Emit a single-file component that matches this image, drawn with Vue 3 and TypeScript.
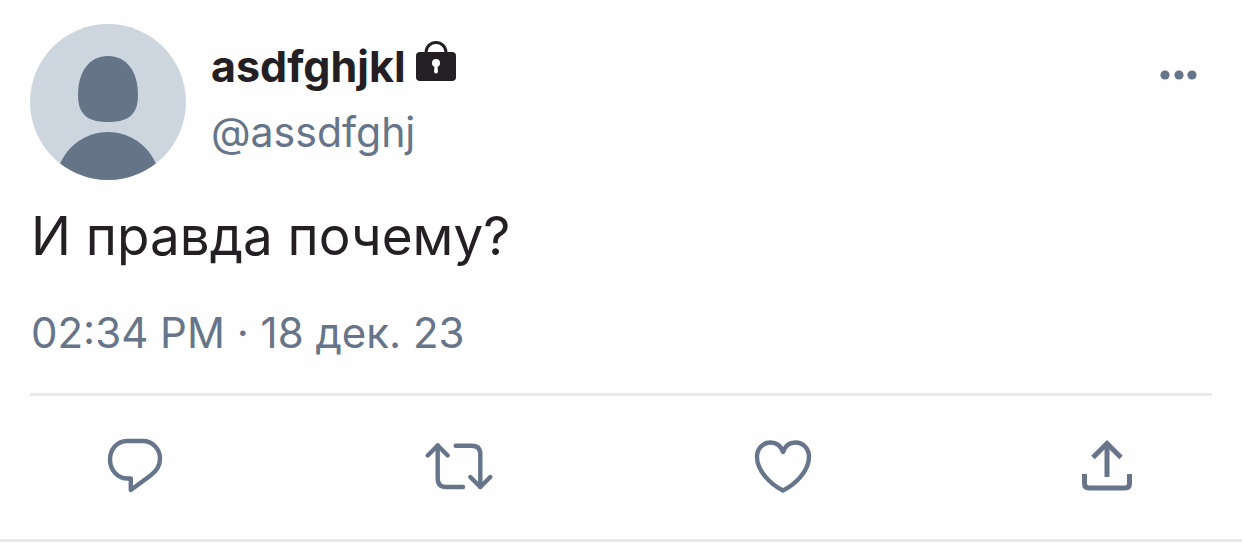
<script setup lang="ts">
interface Action {
  name: string
  label: string
  stroke: number
  paths: string[]
}

const author = { name: 'asdfghjkl', handle: '@assdfghj' }
const text = 'И правда почему?'
const time = '02:34 PM · 18 дек. 23'

const actions: Action[] = [
  {
    name: 'reply',
    label: 'Ответить',
    stroke: 4.4,
    paths: [
      'M25 6H41C50.500 6 58 14 58 23.500C58 31 54 36.500 48.500 40.500L28.800 55V43.500H26C15.500 43.500 8 35 8 24.500C8 14 15.500 6 25 6Z',
    ],
  },
  {
    name: 'repost',
    label: 'Ретвитнуть',
    stroke: 4.4,
    paths: [
      'M1.700 20.500L11.700 10.500L21.700 20.500',
      'M11.700 10.500V43.500Q11.700 52 20.200 52H37',
      'M29.700 10.700H45.800Q54.300 10.700 54.300 19.200V52',
      'M44.300 42L54.300 52L64.300 42',
    ],
  },
  {
    name: 'like',
    label: 'Нравится',
    stroke: 4.4,
    paths: [
      'M33 17C31 11 26.500 7.500 20.500 7.500C12.500 7.500 7 14 7 22C7 35.500 20 49 33 55.500C46 49 59 35.500 59 22C59 14 53.500 7.500 45.500 7.500C39.500 7.500 35 11 33 17Z',
    ],
  },
  {
    name: 'share',
    label: 'Поделиться',
    stroke: 5,
    paths: ['M19 22.500L33 8.500L47 22.500', 'M33 9V42', 'M10.500 39V48.500Q10.500 53 15 53H51Q55.500 53 55.500 48.500V39'],
  },
]
</script>

<template>
  <article class="tweet">
    <div class="content">
      <header class="header">
        <svg class="avatar" viewBox="0 0 156 156" aria-hidden="true">
          <defs>
            <clipPath id="avatar-clip"><circle cx="78" cy="78" r="78" /></clipPath>
          </defs>
          <g clip-path="url(#avatar-clip)">
            <rect width="156" height="156" fill="#cdd6df" />
            <path
              fill="#657487"
              d="M78 32C97 32 108 48 108 71C108 90 99 98 78 98C57 98 48 90 48 71C48 48 59 32 78 32Z"
            />
            <circle cx="78" cy="160" r="52" fill="#657487" />
          </g>
        </svg>
        <div class="identity">
          <div class="name-row">
            <span class="name">{{ author.name }}</span>
            <svg class="lock" viewBox="0 0 40 42" role="img" aria-label="Закрытый аккаунт">
              <path d="M10 14V12.500A10 10 0 0 1 30 12.500V14" fill="none" stroke="#231f23" stroke-width="3" />
              <rect y="12" width="40" height="29" rx="4" fill="#231f23" />
              <path d="M18.500 25.500H21.500L22 32Q20 35 18 32Z" fill="#fefefe" />
              <circle cx="20" cy="23" r="4" fill="#fefefe" />
            </svg>
          </div>
          <a class="handle" href="#">{{ author.handle }}</a>
        </div>
        <button class="more" type="button" aria-label="Ещё">
          <svg viewBox="0 0 38 12" aria-hidden="true">
            <circle cx="5" cy="6" r="4.600" />
            <circle cx="19" cy="6" r="4.600" />
            <circle cx="32" cy="6" r="4.600" />
          </svg>
        </button>
      </header>

      <p class="text">{{ text }}</p>
      <time class="time">{{ time }}</time>

      <div class="actions">
        <button
          v-for="action in actions"
          :key="action.name"
          class="action"
          :class="action.name"
          type="button"
          :aria-label="action.label"
        >
          <svg viewBox="0 0 66 60" :stroke-width="action.stroke" aria-hidden="true">
            <path v-for="d in action.paths" :key="d" :d="d" />
          </svg>
        </button>
      </div>
    </div>
  </article>
</template>

<style>
body {
  margin: 0;
  background: #fefefe;
}
</style>

<style scoped>
.tweet {
  font-family: Inter, 'Liberation Sans', sans-serif;
  color: #231f23;
  border-bottom: 3px solid #e9e8eb;
}

.content {
  padding: 24px 30px 44px;
}

.header {
  display: flex;
  align-items: flex-start;
}

.avatar {
  width: 156px;
  height: 156px;
  flex: none;
}

.identity {
  flex: 1;
  min-width: 0;
  padding: 9px 0 0 25px;
  line-height: 66px;
}

.name-row {
  display: flex;
  align-items: center;
  gap: 10px;
}

.name {
  font-size: 43px;
  font-weight: 700;
}

.lock {
  width: 40px;
  height: 42px;
  margin-bottom: 10px;
}

.handle {
  display: block;
  font-size: 41px;
  color: #667589;
  text-decoration: none;
}

.more {
  margin: 45px 14px 0 0;
  padding: 0;
  border: 0;
  background: none;
  cursor: pointer;
}

.more svg {
  display: block;
  width: 38px;
  height: 12px;
  fill: #667589;
}

.text {
  margin: 24px 1px 40px;
  font-size: 53px;
  line-height: 64px;
}

.time {
  display: block;
  margin: 0 1px;
  font-size: 42px;
  line-height: 50px;
  color: #667589;
}

.actions {
  display: flex;
  justify-content: space-between;
  margin-top: 35px;
  padding: 39px 72px 0;
  border-top: 3px solid #e9e9ea;
}

.action {
  padding: 0;
  border: 0;
  background: none;
  cursor: pointer;
}

.action svg {
  display: block;
  width: 66px;
  height: 60px;
  overflow: visible;
  fill: none;
  stroke: #667589;
  stroke-linecap: round;
  stroke-linejoin: round;
}

.share svg {
  stroke-linecap: butt;
  stroke-linejoin: miter;
}
</style>
